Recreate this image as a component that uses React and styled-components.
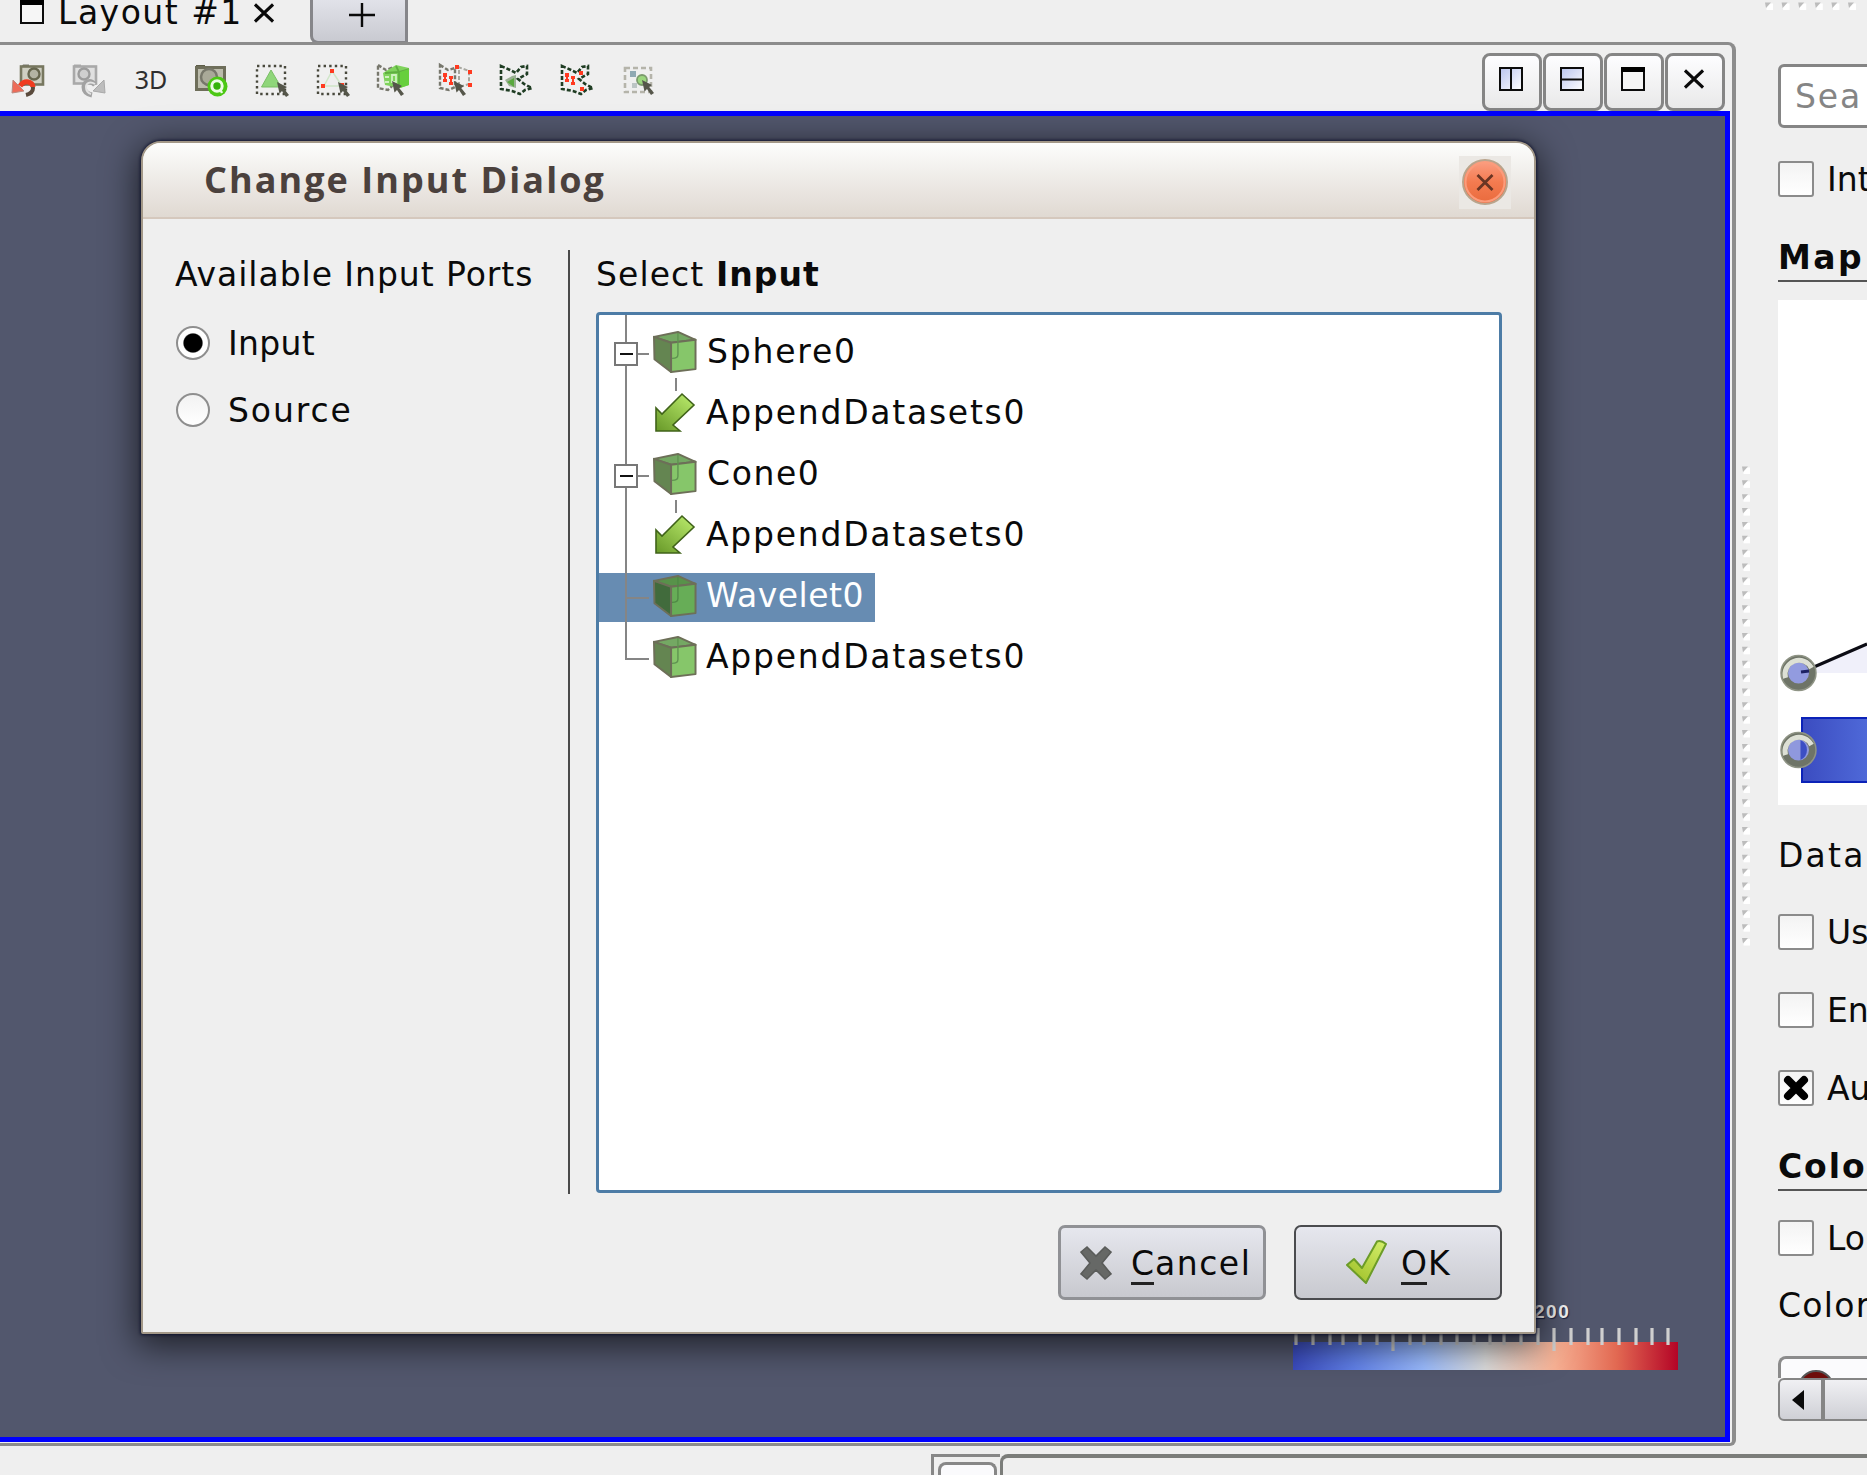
import React from 'react';
import styled, { createGlobalStyle, css } from 'styled-components';

const Global = createGlobalStyle`
  * { box-sizing: border-box; }
  body { margin: 0; background: #efefef; overflow: hidden; }
`;

const Screen = styled.div`
  width: 1867px;
  height: 1475px;
  display: flex;
  overflow: hidden;
  background: #efefef;
  color: #0a0a0a;
  font-family: "DejaVu Sans", sans-serif;
  font-size: 33px;
  white-space: nowrap;
`;

const Txt = styled.span`
  letter-spacing: ${p => p.$ls || 0}px;
  font-weight: ${p => (p.$bold ? 700 : 400)};
`;

/* ---------- central area ---------- */
const Center = styled.div`
  width: 1736px;
  flex: none;
  display: flex;
  flex-direction: column;
`;
const TabStrip = styled.div`
  height: 42px;
  flex: none;
  display: flex;
`;
const Tab = styled.div`
  width: 310px;
  height: 26px;
  padding-left: 20px;
  display: flex;
  align-items: flex-start;
  svg { flex: none; }
`;
const TabTitle = styled(Txt)`
  width: 196px;
  margin-left: 14px;
  line-height: 38px;
  margin-top: -6px;
`;
const TabClose = styled.span`
  display: flex;
  padding-top: 3px;
`;
const AddTab = styled.div`
  width: 98px;
  height: 44px;
  display: flex;
  justify-content: center;
  padding-left: 6px;
  border: 3px solid #86868a;
  border-top: 0;
  border-radius: 0 0 0 8px;
  background: linear-gradient(#e1e2e9, #c9cad1);
`;
const Frame = styled.div`
  height: 1404px;
  flex: none;
  display: flex;
  flex-direction: column;
  border: solid #8c8c8c;
  border-width: 3px 4px 3px 0;
  border-radius: 0 8px 6px 0;
  padding: 0 2px 1px 0;
`;
const ToolRow = styled.div`
  height: 66px;
  flex: none;
  display: flex;
  justify-content: space-between;
  padding: 0 5px 0 0;
`;
const Tools = styled.div`
  display: flex;
  margin-left: -3px;
`;
const Tool = styled.div`
  width: 61px;
  height: 70px;
  display: flex;
  align-items: center;
  justify-content: center;
  svg { filter: blur(0.5px); }
`;
const ToolLabel = styled.span`
  font-family: "Noto Sans", sans-serif;
  font-size: 25px;
  line-height: 30px;
  color: #2e2e2e;
  margin: 0 0 3px 3px;
`;
const WindowButtons = styled.div`
  display: flex;
  padding-top: 8px;
  gap: 1px;
`;
const WindowButton = styled.div`
  width: 60px;
  height: 58px;
  border: 3px solid #858585;
  border-radius: 8px;
  background: linear-gradient(#fdfdff, #e9e9e9);
  display: flex;
  justify-content: center;
  padding: ${p => p.$top || 11}px 3px 0 0;
`;
const Viewport = styled.div`
  flex: 1;
  position: relative;
  border: solid #0000fe;
  border-width: 5px 5px 5px 0;
  background: #52576d;
`;
const Legend = styled.div`
  position: absolute;
  left: 1293px;
  top: 1181px;
  width: 385px;
`;
const LegendLabel = styled.div`
  margin-left: 241px;
  height: 30px;
  font: bold 19px/30px "Liberation Sans", sans-serif;
  letter-spacing: 1.5px;
  color: #f2f2f2;
  text-shadow: 1px 1px 1px #1a2040;
`;
const StatusArea = styled.div`
  margin-left: 931px;
  width: 805px;
  margin-top: 8px;
  display: flex;
  height: 21px;
`;
const StatusTab = styled.div`
  width: 69px;
  border: 3px solid #878787;
  border-bottom: 0;
  border-right: 0;
  padding: 5px 3px 0 4px;
  display: flex;
`;
const StatusTabButton = styled.div`
  width: 60px;
  border: 3px solid #878787;
  border-bottom: 0;
  border-radius: 8px 8px 0 0;
  background: #fafafc;
`;
const StatusPane = styled.div`
  flex: 1;
  border: solid #7b7d7a;
  border-width: 4px 0 0 3px;
  border-radius: 8px 0 0 0;
`;

/* ---------- right dock ---------- */
const Dock = styled.div`
  width: 131px;
  height: 1475px;
  flex: none;
  display: flex;
  flex-direction: column;
`;
const DockGrip = styled.div`
  height: 64px;
  flex: none;
  margin-left: 28px;
  svg { display: block; }
`;
const DockBody = styled.div`
  display: flex;
  height: 1390px;
  flex: none;
`;
const DockFooter = styled.div`
  height: 21px;
  border-top: 4px solid #7b7d7a;
`;
const Splitter = styled.div`
  width: 42px;
  flex: none;
  padding: 402px 0 0 6px;
`;
const Properties = styled.div`
  width: 89px;
  overflow: hidden;
`;
const Search = styled.div`
  width: 300px;
  height: 64px;
  margin-bottom: -1px;
  padding-left: 14px;
  border: 3px solid #858585;
  border-radius: 6px;
  background: #fff;
  color: #858585;
  line-height: 60px;
`;
const Option = styled.div`
  height: 36px;
  margin-top: ${p => p.$gap}px;
  display: flex;
  align-items: center;
  line-height: 38px;
`;
const Box = styled.div`
  width: 36px;
  height: 36px;
  flex: none;
  margin-right: 13px;
  border: 2px solid #8b8b8b;
  border-radius: 3px;
  background: linear-gradient(#f3f3f3, #fff);
  display: flex;
  align-items: center;
  justify-content: center;
`;
const OptionText = styled(Txt)`
  margin-top: 2px;
`;
const Heading = styled.div`
  margin-top: ${p => p.$gap}px;
  height: 46px;
  line-height: 43px;
  border-bottom: 2px solid #555;
  font-weight: 700;
  letter-spacing: ${p => p.$ls || 0}px;
`;
const Plot = styled.div`
  height: 505px;
  margin-top: 18px;
  background: #fff;
`;
const Label = styled.div`
  margin-top: ${p => p.$gap}px;
  height: 38px;
  line-height: 39px;
  letter-spacing: ${p => p.$ls || 0}px;
`;
const Combo = styled.div`
  width: 200px;
  height: 22px;
  margin-top: 32px;
  border: 3px solid #8b8b8b;
  border-bottom: 0;
  border-radius: 8px 0 0 0;
  background: #fbfbfd;
  padding: 11px 0 0 17px;
  overflow: hidden;
`;
const ScrollBar = styled.div`
  width: 200px;
  height: 43px;
  display: flex;
  border: 2px solid #858585;
  border-radius: 6px;
  background: linear-gradient(#f0f0f3, #cfd0d6);
`;
const ScrollArrow = styled.div`
  width: 45px;
  border-right: 4px solid #858585;
  display: flex;
  align-items: center;
  padding-left: 12px;
`;

/* ---------- dialog ---------- */
const Dialog = styled.div`
  position: absolute;
  left: 141px;
  top: 141px;
  width: 1395px;
  height: 1193px;
  border: 2px solid #a39888;
  border-radius: 20px 20px 2px 2px;
  background: #efefef;
  box-shadow: 0 0 3px 1px rgba(5, 10, 40, 0.75), 0 8px 34px 4px rgba(0, 0, 0, 0.62);
  display: flex;
  flex-direction: column;
`;
const TitleBar = styled.div`
  height: 76px;
  flex: none;
  padding: 0 23px 0 61px;
  display: flex;
  align-items: center;
  justify-content: space-between;
  border-bottom: 2px solid #d5c8bd;
  border-radius: 18px 18px 0 0;
  background: linear-gradient(#fdfdfc, #f2f0ed 35%, #e0d9d2);
`;
const Title = styled.h1`
  margin: 0;
  font: 700 36px/70px "Open Sans", sans-serif;
  color: #4b413d;
  letter-spacing: ${p => p.$ls}px;
`;
const CloseHolder = styled.div`
  width: 52px;
  height: 53px;
  margin-top: 4px;
  background: #ebe8e4;
  display: flex;
  align-items: center;
  justify-content: center;
`;
const DialogMain = styled.div`
  display: flex;
  height: 944px;
  margin-top: 31px;
  padding: 0 31px 0 32px;
`;
const Ports = styled.div`
  width: 395px;
  border-right: 2px solid #4a4a4a;
  display: flex;
  flex-direction: column;
`;
const Caption = styled.div`
  height: 46px;
  line-height: 46px;
  margin-top: 1px;
  padding-top: 1px;
  letter-spacing: ${p => p.$ls}px;
`;
const Radio = styled.div`
  display: flex;
  align-items: center;
  height: 67px;
  margin-top: ${p => p.$gap || 0}px;
  padding-left: 1px;
`;
const RadioText = styled(Txt)`
  padding-top: 2px;
`;
const Dot = styled.span`
  width: 34px;
  height: 34px;
  margin-right: 18px;
  flex: none;
  border-radius: 50%;
  border: 2px solid #8e8e8e;
  background: ${p => (p.$on ? 'radial-gradient(circle, #000 9px, #fff 10.2px)' : 'linear-gradient(#f2f2f2, #fff)')};
`;
const Inputs = styled.div`
  flex: 1;
  padding-left: 26px;
  display: flex;
  flex-direction: column;
`;
const Tree = styled.div`
  width: 906px;
  height: 881px;
  margin-top: 15px;
  border: 3px solid #4d7ca6;
  border-radius: 4px;
  background: #fff;
`;
const treeLine = css`linear-gradient(#858585, #858585)`;
const TreeTop = styled.div`
  height: 8px;
  background: ${treeLine} 26px 0 / 2px 100% no-repeat;
`;
const Row = styled.div`
  height: 61px;
  position: relative;
  display: flex;
  align-items: center;
  color: ${p => (p.$selected ? '#fff' : '#0a0a0a')};
  background: ${p => (p.$selected ? 'linear-gradient(#678cb2, #678cb2) 0 50% / 276px 49px no-repeat' : 'none')};
  svg { margin-top: -3px; }
`;
const Gutter = styled.div`
  width: 54px;
  height: 61px;
  display: flex;
  align-items: center;
  padding-left: 15px;
  background:
    ${treeLine} 26px 0 / 2px ${p => (p.$last ? '32px' : '100%')} no-repeat,
    ${treeLine} 26px 30px / ${p => (p.$child ? '0' : '24px')} 2px no-repeat;
`;
const Expander = styled.span`
  width: 24px;
  height: 24px;
  margin-top: 1px;
  border: 2px solid #777;
  background: linear-gradient(#111, #111) center / 13px 2px no-repeat #fff;
`;
const ChildLink = styled.span`
  position: absolute;
  left: 76px;
  top: -6px;
  width: 2px;
  height: 13px;
  background: #858585;
`;
const RowText = styled(Txt)`
  margin-left: ${p => (p.$wide ? 10 : 9)}px;
  line-height: 57px;
  margin-top: -4px;
`;
const Actions = styled.div`
  display: flex;
  justify-content: flex-end;
  gap: 28px;
  margin-top: 31px;
  padding-right: 32px;
`;
const Button = styled.button`
  width: 208px;
  height: 75px;
  padding: 0 0 0 ${p => p.$pad}px;
  display: flex;
  align-items: center;
  border: ${p => (p.$primary ? '2px solid #4a4b4e' : '3px solid #909195')};
  border-radius: 7px;
  background: linear-gradient(#e6e7ee, #c8c9cf);
  font: 33px "DejaVu Sans", sans-serif;
  color: #0a0a0a;
`;
const ButtonText = styled(Txt)`
  margin-left: ${p => p.$gap}px;
  margin-top: 3px;
`;
const Key = styled.span`
  border-bottom: 3px solid #222;
  letter-spacing: 0;
  line-height: 36px;
  display: inline-block;
  margin-right: ${p => p.$gap || 0}px;
`;

/* ---------- icons ---------- */
const WinIcon = ({ kind }) => (
  <svg width="24" height="25" viewBox="0 0 24 25">
    <defs>
      <linearGradient id="pane" x1="0" y1="0" x2="1" y2="1">
        <stop offset="0" stopColor="#b9c4ee" />
        <stop offset="1" stopColor="#fff" />
      </linearGradient>
    </defs>
    <rect x="1" y="1" width="22" height="22" fill={kind === 'max' ? '#f6f6f6' : 'url(#pane)'} stroke="#0c0c0c" strokeWidth="2" />
    {kind === 'max' && <rect x="0" y="0" width="24" height="5" fill="#000" />}
    {kind === 'h' && <path d="M12 1V23" stroke="#0c0c0c" strokeWidth="2" />}
    {kind === 'v' && <path d="M1 12.5H23" stroke="#0c0c0c" strokeWidth="2" />}
  </svg>
);
const Cross = ({ size = 21 }) => (
  <svg width={size} height={size} viewBox="0 0 21 21">
    <path d="M1 1.5L20 19.5M20 1.5L1 19.5" stroke="#0a0a0a" strokeWidth="3.2" />
  </svg>
);
const Ico = ({ children }) => (
  <svg width="36" height="36" viewBox="0 0 36 36" fill="none">{children}</svg>
);
const Cursor = ({ x, y }) => (
  <path transform={`translate(${x} ${y})`} d="M0 0L10 5L7.2 7L12 13L9 15L5 9L2.5 11.5Z" fill="#55564a" />
);
const Dotted = () => (
  <rect x="3" y="4" width="28" height="28" stroke="#48483c" strokeWidth="2.4" strokeDasharray="2.4 3.2" />
);
const UndoCamera = () => (
  <Ico>
    <path d="M12 4H19V2.5H13Z" fill="#77776a" />
    <rect x="11" y="4.5" width="22" height="18" fill="#cfcfc2" stroke="#77775f" strokeWidth="2.6" />
    <circle cx="24" cy="12" r="5.5" fill="#b3b3a4" stroke="#66664f" strokeWidth="2.4" />
    <path d="M12 23C17 17 23 21 23 26C23 30 20 32 16 33" stroke="#5a4a3c" strokeWidth="4" />
    <path d="M10 24C15 17 23 20 23 25" stroke="#ef3c20" strokeWidth="5" />
    <path d="M2 31L3 18L14 29Z" fill="#ee6b58" stroke="#b98a80" />
  </Ico>
);
const RedoCamera = () => (
  <Ico>
    <path d="M3 4V2.5H10V4" fill="#aaa" />
    <rect x="3" y="4.5" width="22" height="17" fill="#e0e0e0" stroke="#a9a9a9" strokeWidth="2.6" />
    <circle cx="13" cy="12" r="5.5" fill="#cfcfcf" stroke="#9c9c9c" strokeWidth="2.4" />
    <path d="M24 23C19 17 13 20 13 25C13 30 16 32 21 33" stroke="#a2a2a2" strokeWidth="5" />
    <path d="M24 22C19 19 15 21 15 25C15 29 17 31 20 32" stroke="#e3e3e3" strokeWidth="2" />
    <path d="M34 31L33 18L22 29Z" fill="#bdbdbd" stroke="#a8a8a8" />
  </Ico>
);
const CameraLink = () => (
  <Ico>
    <path d="M3 5V3H12V5" fill="#5d5d48" />
    <rect x="3.5" y="5.5" width="28" height="22" fill="#bcbcac" stroke="#6e6e5a" strokeWidth="3" />
    <circle cx="16" cy="15" r="8" fill="#a9a998" stroke="#77776a" strokeWidth="2.5" />
    <circle cx="24.5" cy="24.5" r="10" fill="#4cc814" />
    <circle cx="24" cy="24" r="5.2" fill="#35b30a" stroke="#ecfbe4" strokeWidth="3" />
    <path d="M27 27L29 31" stroke="#ecfbe4" strokeWidth="2.4" />
  </Ico>
);
const SelectCells = () => (
  <Ico>
    <Dotted />
    <path d="M17 8L7.5 25H27Z" fill="#8fd67a" stroke="#79bd65" />
    <Cursor x={23} y={20} />
  </Ico>
);
const SelectPoints = () => (
  <Ico>
    <Dotted />
    <path d="M17 9L9 24H27Z" stroke="#cfe6c8" strokeWidth="1.5" />
    <path d="M15 7h4v4h-4zM6 22h4v4H6zM25 21h4v4h-4z" fill="#ff3a20" />
    <Cursor x={23} y={20} />
  </Ico>
);
const FrustumCells = () => (
  <Ico>
    <path d="M2 3L10 8L18 5V22L12 28L2 26Z" stroke="#77776c" strokeWidth="2.4" strokeDasharray="4 2" />
    <path d="M7 11L20 3L33 6V23L24 26L9 23Z" fill="#7fd35c" />
    <path d="M20 4L23 10V26M23 10L33 7M9 11L23 10" stroke="#5fae40" strokeWidth="1.8" />
    <path d="M24 10L33 7V23L24 26Z" fill="#67cf3d" />
    <path d="M9 15H13M9 20H13M16 13H20V20H16Z" stroke="#d0f2c0" strokeWidth="1.8" />
    <Cursor x={16} y={19} />
  </Ico>
);
const FrustumPoints = () => (
  <Ico>
    <path d="M3 3L11 8L18 6V25L12 28L3 26Z" stroke="#77776c" strokeWidth="2.4" strokeDasharray="4 2" />
    <path d="M21 5L32 9V22L22 25M22 8V22" stroke="#a8a8a0" strokeWidth="2" strokeDasharray="4 2" />
    <path d="M6 11h4v4H6zM6 17h4v3H6zM12 14h4v3h-4zM12 20h4v3h-4zM18 3h4v4h-4zM31 8h4v4h-4zM31 21h4v4h-4zM7 12h2v8H7zM13 14h2v8h-2z" fill="#ff3a20" />
    <Cursor x={17} y={19} />
  </Ico>
);
const polyD = 'M3 4L12 8L18 11L23 5L29 4V12L20 17L26 22L34 26L27 28L22 32L14 29L3 27Z';
const PolyCells = () => (
  <Ico>
    <path d="M7 18L14 14L18 13V26L11 24Z" fill="#9ab093" />
    <path d="M9 20L16 16V25Z" fill="#59a83d" />
    <path d={polyD} stroke="#1f3d23" strokeWidth="2.6" strokeDasharray="4 2" />
  </Ico>
);
const PolyPoints = () => (
  <Ico>
    <path d={polyD} stroke="#1f3d23" strokeWidth="2.6" strokeDasharray="4 2" />
    <path d="M6 11h4v4H6zM6 17h4v3H6zM12 14h4v3h-4zM12 20h4v3h-4zM20 9h4v4h-4zM21 25h4v4h-4zM7 12h2v8H7zM13 14h2v8h-2z" fill="#ff3a20" />
  </Ico>
);
const BlockSelect = () => (
  <Ico>
    <rect x="5" y="6" width="26" height="24" stroke="#b5b4aa" strokeWidth="2.6" strokeDasharray="5 3" />
    <rect x="10" y="9" width="6" height="6" fill="#8fa9b3" />
    <rect x="12" y="21" width="5" height="5" fill="#bcc5c5" />
    <circle cx="22" cy="18" r="5" fill="#9bd67e" stroke="#7b9a6d" strokeWidth="1.8" />
    <Cursor x={22} y={18} />
  </Ico>
);
const Cube = ({ dark }) => (
  <svg width="44" height="44" viewBox="-0.5 -0.5 45 44" fill="none">
    <g stroke="#6d6f58" strokeWidth="2" strokeLinejoin="round">
      <path d="M0.5 6L25 1L43 9L18 12Z" fill={dark ? '#58924a' : '#74a863'} />
      <path d="M0.5 6L18 12V42L1 29Z" fill={dark ? '#416b3c' : '#648551'} />
      <path d="M18 12L43 9V39L18 42Z" fill={dark ? '#67ad57' : '#86c66a'} />
    </g>
    <path d="M25 2V24Q25 28 19 28" stroke={dark ? '#4f8a45' : '#5f9350'} strokeWidth="1.4" />
  </svg>
);
const Arrow = () => (
  <svg width="44" height="42" viewBox="0 0 44 42">
    <defs>
      <linearGradient id="arrow" x1="0.9" y1="0" x2="0.1" y2="1">
        <stop offset="0" stopColor="#b9ea6b" />
        <stop offset="1" stopColor="#6b9c2b" />
      </linearGradient>
    </defs>
    <path d="M3 39V16L9 22L29 2L41 13L20 33L27 39Z" fill="url(#arrow)" stroke="#40631a" strokeWidth="1.6" />
  </svg>
);
const Handle = ({ cx, cy, half }) => (
  <g>
    <circle cx={cx} cy={cy} r="14" fill={half ? '#8f98dd' : '#929bdf'} stroke="#6e7467" strokeWidth="7" />
    {half && <path d={`M${cx + 2} ${cy - 10}A11 11 0 0 1 ${cx + 2} ${cy + 10}Z`} fill="#3c4fc4" />}
    <path d={`M${cx - 13} ${cy + 5}A14 14 0 0 1 ${cx + 13} ${cy - 5}`} fill="none" stroke="#dde0d5" strokeWidth="5" />
    <circle cx={cx} cy={cy} r="17.5" fill="none" stroke="#8f9485" strokeWidth="1.5" />
  </g>
);
const Grips = ({ count, vertical }) => {
  const step = vertical ? 13.87 : 16.6;
  const len = count * step;
  return (
    <svg width={vertical ? 10 : 103} height={vertical ? len : 12} viewBox={`0 0 ${vertical ? 10 : 103} ${vertical ? len : 12}`}>
      {Array.from({ length: count }, (_, i) => {
        const x = vertical ? 0 : 1 + i * step;
        const y = vertical ? i * step : 2;
        return (
          <g key={i}>
            <rect x={x + 1.5} y={y + 1.5} width="6.5" height="6.5" fill="#fff" />
            <path d={`M${x} ${y + 0.5}H${x + 6}L${x + 1} ${y + 6}Z`} fill="#bcbcbc" />
          </g>
        );
      })}
    </svg>
  );
};
const ticks = [2, 19, 36, 49, 66, 83, 99, 116, 130, 147, 163, 180, 196, 210, 227, 244, 260, 277, 294, 308, 325, 342, 358, 374];
const Scale = () => (
  <svg width="385" height="43" viewBox="0 0 385 43">
    <defs>
      <linearGradient id="coolwarm">
        <stop offset="0" stopColor="#3b4cc0" />
        <stop offset="0.16" stopColor="#6282ea" />
        <stop offset="0.34" stopColor="#9bbcff" />
        <stop offset="0.5" stopColor="#dddddd" />
        <stop offset="0.68" stopColor="#f7b194" />
        <stop offset="0.84" stopColor="#e26952" />
        <stop offset="1" stopColor="#b40426" />
      </linearGradient>
    </defs>
    <rect y="15" width="385" height="28" fill="url(#coolwarm)" />
    {ticks.map((x, i) => <rect key={x} x={x - 0.6} y="1" width="3.2" height={i === 6 || i === 16 ? 23 : 17} fill="#cfcfcf" />)}
  </svg>
);

const tools = [UndoCamera, RedoCamera, null, CameraLink, SelectCells, SelectPoints, FrustumCells, FrustumPoints, PolyCells, PolyPoints, BlockSelect];

const rows = [
  { name: 'Sphere0', kind: 'parent', ls: 1.8, wide: true },
  { name: 'AppendDatasets0', kind: 'child', ls: 1.75 },
  { name: 'Cone0', kind: 'parent', ls: 1.6, wide: true },
  { name: 'AppendDatasets0', kind: 'child', ls: 1.75 },
  { name: 'Wavelet0', kind: 'leaf', ls: 0.5, selected: true },
  { name: 'AppendDatasets0', kind: 'leaf', ls: 1.75, last: true },
];

const ChangeInputDialog = () => (
  <Dialog>
    <TitleBar>
      <Title $ls={2.05}>Change Input Dialog</Title>
      <CloseHolder>
        <svg width="48" height="48" viewBox="0 0 48 48">
          <defs>
            <linearGradient id="close" x1="0" y1="0" x2="0" y2="1">
              <stop offset="0" stopColor="#fba085" />
              <stop offset="0.5" stopColor="#f47b50" />
              <stop offset="1" stopColor="#e96a3c" />
            </linearGradient>
          </defs>
          <circle cx="24" cy="24" r="22" fill="url(#close)" stroke="#b9a48c" strokeWidth="2" />
          <circle cx="24" cy="24" r="19.5" fill="none" stroke="#fb9c7c" strokeWidth="2" />
          <path d="M16.5 17L31.5 32M31.5 17L16.5 32" stroke="#693524" strokeWidth="2.8" />
        </svg>
      </CloseHolder>
    </TitleBar>
    <DialogMain>
      <Ports>
        <Caption $ls={0.95}>Available Input Ports</Caption>
        <Radio $gap={12}><Dot $on /><RadioText $ls={0.3}>Input</RadioText></Radio>
        <Radio><Dot /><RadioText $ls={1.9}>Source</RadioText></Radio>
      </Ports>
      <Inputs>
        <Caption $ls={1.1}>Select <Txt $bold $ls={1}>Input</Txt></Caption>
        <Tree>
          <TreeTop />
          {rows.map((r, i) => (
            <Row key={i} $selected={r.selected}>
              <Gutter $child={r.kind === 'child'} $last={r.last}>
                {r.kind === 'parent' && <Expander />}
              </Gutter>
              {r.kind === 'child' && <ChildLink />}
              {r.kind === 'child' ? <Arrow /> : <Cube dark={r.selected} />}
              <RowText $ls={r.ls} $wide={r.wide}>{r.name}</RowText>
            </Row>
          ))}
        </Tree>
      </Inputs>
    </DialogMain>
    <Actions>
      <Button $pad={18}>
        <svg width="34" height="36" viewBox="0 0 34 36">
          <path d="M2 7L8 2L17 11L26 2L32 7L23 18L32 29L26 34L17 25L8 34L2 29L11 18Z" fill="#666866" stroke="#5a5c5a" strokeWidth="1.6" />
        </svg>
        <ButtonText $gap={18} $ls={1.5}><Key $gap={1}>C</Key>ancel</ButtonText>
      </Button>
      <Button $primary $pad={48}>
        <svg width="44" height="46" viewBox="0 0 44 46">
          <defs>
            <linearGradient id="tick" x1="1" y1="0" x2="0.3" y2="1">
              <stop offset="0" stopColor="#d4ef6b" />
              <stop offset="1" stopColor="#a2c32d" />
            </linearGradient>
          </defs>
          <path d="M3 25L10 19L18 28L33 1.5Q37 0 42 4L22 43Z" fill="url(#tick)" stroke="#6c9c28" strokeWidth="2" strokeLinejoin="round" />
        </svg>
        <ButtonText $gap={13}><Key $gap={1}>O</Key>K</ButtonText>
      </Button>
    </Actions>
  </Dialog>
);

const PropertyDock = () => (
  <Dock>
    <DockGrip><Grips count={6} /></DockGrip>
    <DockBody>
      <Splitter><Grips count={35} vertical /></Splitter>
      <Properties>
        <Search><Txt $ls={1.9}>Sea</Txt></Search>
        <Option $gap={34}><Box /><OptionText>Int</OptionText></Option>
        <Heading $gap={39} $ls={2.4}>Map</Heading>
        <Plot>
          <svg width="89" height="505" viewBox="0 0 89 505">
            <defs>
              <linearGradient id="ramp">
                <stop offset="0" stopColor="#3b4cc0" />
                <stop offset="1" stopColor="#506bda" />
              </linearGradient>
            </defs>
            <path d="M22 373L89 344V373Z" fill="#f0f0fa" />
            <path d="M22 373L89 344" stroke="#0c0c14" strokeWidth="3" />
            <rect x="24" y="418" width="70" height="64" fill="url(#ramp)" stroke="#0b22b8" strokeWidth="2" />
            <Handle cx={20.5} cy={373} />
            <path d="M23 372L31 371" stroke="#1d2263" strokeWidth="3" />
            <Handle cx={20.5} cy={450} half />
          </svg>
        </Plot>
        <Label $gap={31} $ls={2.2}>Data</Label>
        <Option $gap={40}><Box /><OptionText>Us</OptionText></Option>
        <Option $gap={42}><Box /><OptionText>En</OptionText></Option>
        <Option $gap={42}>
          <Box>
            <svg width="26" height="26" viewBox="0 0 26 26">
              <path d="M5 5L21 21M21 5L5 21" stroke="#000" strokeWidth="8" strokeLinecap="round" />
            </svg>
          </Box>
          <OptionText>Au</OptionText>
        </Option>
        <Heading $gap={39} $ls={1.9}>Colo</Heading>
        <Option $gap={29}><Box /><OptionText>Lo</OptionText></Option>
        <Label $gap={30} $ls={1.3}>Color</Label>
        <Combo>
          <svg width="36" height="36" viewBox="0 0 36 36">
            <circle cx="18" cy="18" r="17" fill="#6e0d0a" stroke="#555" strokeWidth="2" />
          </svg>
        </Combo>
        <ScrollBar>
          <ScrollArrow>
            <svg width="12" height="20" viewBox="0 0 12 20"><path d="M12 0V20L0 10Z" fill="#0a0a0a" /></svg>
          </ScrollArrow>
        </ScrollBar>
      </Properties>
    </DockBody>
    <DockFooter />
  </Dock>
);

export default function App() {
  return (
    <Screen>
      <Global />
      <Center>
        <TabStrip>
          <Tab>
            <WinIcon kind="max" />
            <TabTitle $ls={1.5}>Layout #1</TabTitle>
            <TabClose><Cross size={20} /></TabClose>
          </Tab>
          <AddTab>
            <svg width="26" height="30" viewBox="0 0 26 30">
              <path d="M13 3V27M0 15H26" stroke="#0a0a0a" strokeWidth="2.4" />
            </svg>
          </AddTab>
        </TabStrip>
        <Frame>
          <ToolRow>
            <Tools>
              {tools.map((Icon, i) => (
                <Tool key={i}>{Icon ? <Icon /> : <ToolLabel>3D</ToolLabel>}</Tool>
              ))}
            </Tools>
            <WindowButtons>
              <WindowButton><WinIcon kind="h" /></WindowButton>
              <WindowButton><WinIcon kind="v" /></WindowButton>
              <WindowButton><WinIcon kind="max" /></WindowButton>
              <WindowButton $top={13}><Cross size={20} /></WindowButton>
            </WindowButtons>
          </ToolRow>
          <Viewport>
            <Legend>
              <LegendLabel>200</LegendLabel>
              <Scale />
            </Legend>
          </Viewport>
        </Frame>
        <StatusArea>
          <StatusTab><StatusTabButton /></StatusTab>
          <StatusPane />
        </StatusArea>
      </Center>
      <PropertyDock />
      <ChangeInputDialog />
    </Screen>
  );
}
